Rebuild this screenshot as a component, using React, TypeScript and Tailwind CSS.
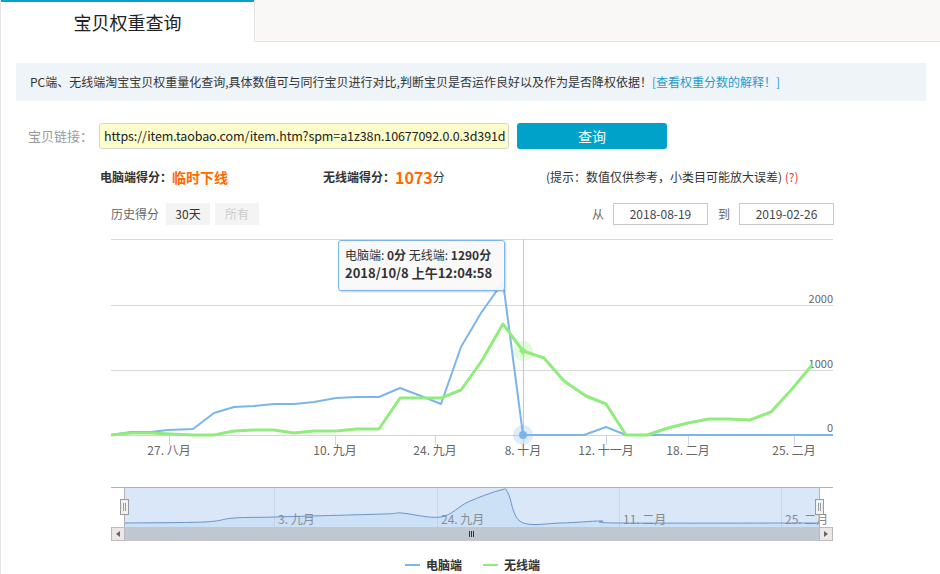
import React from 'react';

const FONT = "font-['Noto_Sans_CJK_SC','Noto_Sans',sans-serif]";

// 图表数据（像素坐标）
const pcPoints: [number, number][] = [
  [110, 435], [130, 432], [150, 432], [167, 430], [192, 429], [213, 413], [233, 407], [253, 406],
  [273, 404], [293, 404], [313, 402], [335, 398], [356, 397], [378, 397], [399, 388], [420, 396],
  [440, 404], [460, 347], [480, 313], [502, 282], [522, 435], [543, 435], [563, 435], [583, 435],
  [605, 427], [625, 435], [832, 435],
];

const wirelessPoints: [number, number][] = [
  [110, 435], [130, 433], [150, 433], [170, 434], [192, 435], [213, 435], [233, 431], [253, 430],
  [273, 430], [293, 433], [313, 431], [335, 431], [356, 429], [378, 429], [399, 398], [420, 398],
  [440, 398], [460, 390], [480, 362], [502, 324], [522, 351], [543, 358], [563, 381], [585, 396],
  [605, 404], [625, 435], [646, 435], [667, 428], [687, 423], [708, 419], [728, 419], [749, 420],
  [770, 412], [791, 389], [811, 365],
];

const navPoints: [number, number][] = [
  [123, 523], [203, 522], [233, 518], [273, 517], [383, 514], [400, 513], [440, 517], [467, 502],
  [500, 490], [507, 493], [520, 522], [560, 523], [600, 521], [617, 523], [818, 523],
];

const xTicks = [
  { x: 168, label: '27. 八月' },
  { x: 334, label: '10. 九月' },
  { x: 434, label: '24. 九月' },
  { x: 522, label: '8. 十月' },
  { x: 605, label: '12. 十一月' },
  { x: 687, label: '18. 二月' },
  { x: 793, label: '25. 二月' },
];

const navLabels = [
  { x: 273, label: '3. 九月' },
  { x: 436, label: '24. 九月' },
  { x: 618, label: '11. 二月' },
  { x: 780, label: '25. 二月' },
];

const toPolyline = (pts: [number, number][]) => pts.map((p) => p.join(',')).join(' ');

// 平滑曲线
const smoothPath = (pts: [number, number][]) => {
  let d = `M${pts[0][0]},${pts[0][1]}`;
  for (let i = 0; i < pts.length - 1; i++) {
    const p0 = pts[i - 1] || pts[i];
    const p1 = pts[i];
    const p2 = pts[i + 1];
    const p3 = pts[i + 2] || p2;
    const c1x = p1[0] + (p2[0] - p0[0]) / 6;
    const c1y = p1[1] + (p2[1] - p0[1]) / 6;
    const c2x = p2[0] - (p3[0] - p1[0]) / 6;
    const c2y = p2[1] - (p3[1] - p1[1]) / 6;
    d += ` C${c1x},${c1y} ${c2x},${c2y} ${p2[0]},${p2[1]}`;
  }
  return d;
};

function Chart() {
  const navLine = smoothPath(navPoints);
  return (
    <div className="relative">
      <svg width={940} height={342} viewBox="0 232 940 342" className="block" fontFamily="'Noto Sans CJK SC','Noto Sans',sans-serif">
        {/* 网格线 */}
        {[239, 305, 370].map((y) => (
          <line key={y} x1={110} x2={832} y1={y + 0.5} y2={y + 0.5} stroke="#d8d8d8" strokeWidth={1} />
        ))}
        <line x1={110} x2={832} y1={435.5} y2={435.5} stroke="#ccd6eb" strokeWidth={1} />
        {/* Y 轴标签 */}
        <text x={832} y={303} textAnchor="end" fontSize={11} fill="#666">2000</text>
        <text x={832} y={368} textAnchor="end" fontSize={11} fill="#666">1000</text>
        <text x={832} y={432} textAnchor="end" fontSize={11} fill="#666">0</text>
        {/* X 轴 */}
        {xTicks.map((t) => (
          <g key={t.label}>
            <line x1={t.x + 0.5} x2={t.x + 0.5} y1={435} y2={445} stroke="#ccd6eb" />
            <text x={t.x} y={455} textAnchor="middle" fontSize={12} fill="#666">{t.label}</text>
          </g>
        ))}
        {/* 十字线 */}
        <line x1={522.5} x2={522.5} y1={239} y2={435} stroke="#c8c8c8" strokeWidth={1} />
        {/* 数据线 */}
        <polyline points={toPolyline(pcPoints)} fill="none" stroke="#7cb5ec" strokeWidth={2} strokeLinejoin="round" />
        <polyline points={toPolyline(wirelessPoints)} fill="none" stroke="#90ed7d" strokeWidth={3} strokeLinejoin="round" />
        {/* 悬停点 */}
        <circle cx={522} cy={351} r={10} fill="#90ed7d" opacity={0.25} />
        <path d="M522,347 L526,351 L522,355 L518,351 Z" fill="#90ed7d" />
        <circle cx={522} cy={435} r={10} fill="#7cb5ec" opacity={0.25} />
        <circle cx={522} cy={435} r={4} fill="#7cb5ec" />

        {/* 导航器 */}
        <rect x={123} y={487} width={695} height={40} fill="#d9e7f8" />
        {navLabels.map((n) => (
          <g key={n.label}>
            <line x1={n.x + 0.5} x2={n.x + 0.5} y1={487} y2={527} stroke="#c9d6e6" />
            <text x={n.x + 4} y={524} fontSize={12} fill="#888">{n.label}</text>
          </g>
        ))}
        <path d={`${navLine} L818,527 L123,527 Z`} fill="#7cb5ec" opacity={0.12} />
        <path d={navLine} fill="none" stroke="#6b94c9" strokeWidth={1} />
        <path d="M110,487.5 H832 M123.5,487 V527 M818.5,487 V527" stroke="#b2b1b6" fill="none" />
        {/* 滚动条 */}
        <rect x={110} y={527} width={722} height={14} fill="#bfc7d1" />
        <rect x={110.5} y={527.5} width={13} height={13} fill="#ebe7e8" stroke="#bbb" />
        <path d="M119,531 L115,534 L119,537 Z" fill="#666" />
        <rect x={818.5} y={527.5} width={13} height={13} fill="#ebe7e8" stroke="#bbb" />
        <path d="M823,531 L827,534 L823,537 Z" fill="#666" />
        <path d="M468.5,531 V537 M470.5,531 V537 M472.5,531 V537" stroke="#333" strokeWidth={1} />
        {/* 手柄 */}
        <rect x={119.5} y={499.5} width={8} height={15} fill="#f2f2f2" stroke="#999" />
        <path d="M122.5,503 V511 M124.5,503 V511" stroke="#999" />
        <rect x={814.5} y={499.5} width={8} height={15} fill="#f2f2f2" stroke="#999" />
        <path d="M817.5,503 V511 M819.5,503 V511" stroke="#999" />

        {/* 图例 */}
        <line x1={404} x2={419} y1={565} y2={565} stroke="#7cb5ec" strokeWidth={2} />
        <text x={425} y={569.5} fontSize={12} fontWeight="bold" fill="#333">电脑端</text>
        <line x1={482} x2={497} y1={565} y2={565} stroke="#90ed7d" strokeWidth={2} />
        <text x={503} y={569.5} fontSize={12} fontWeight="bold" fill="#333">无线端</text>
      </svg>

      {/* 提示框 */}
      <div className="absolute left-[337px] top-[8px] w-[167px] h-[51px] rounded-[3px] border border-[#7cb5ec] bg-[#f9f9f9]/95 shadow-[1px_1px_2px_rgba(0,0,0,0.2)] px-[6px] pt-[5px] text-[12px] leading-[18px] text-[#333]">
        <div className="whitespace-nowrap">
          电脑端: <b>0分</b> 无线端: <b>1290分</b>
        </div>
        <div className="whitespace-nowrap font-bold text-[13px]">2018/10/8 上午12:04:58</div>
      </div>
    </div>
  );
}

export default function App() {
  return (
    <div className={`${FONT} w-[940px] h-[574px] overflow-hidden bg-white border-l border-[#e6e6e6] text-[#333]`}>
      {/* 顶部标签 */}
      <div className="flex h-[42px]">
        <div className="w-[253px] border-t-2 border-[#0aa0cc] bg-white flex items-center justify-center text-[18px] text-[#222]">
          宝贝权重查询
        </div>
        <div className="flex-1 bg-[#f9f8f7] border-l border-b border-[#e4e4e4]" />
      </div>

      {/* 说明 */}
      <div className="mt-[21px] ml-[15px] w-[910px] h-[38px] bg-[#eff4f8] flex items-center pl-[14px] text-[12px] text-[#333] whitespace-nowrap">
        PC端、无线端淘宝宝贝权重量化查询,具体数值可与同行宝贝进行对比,判断宝贝是否运作良好以及作为是否降权依据！
        <a href="#" className="text-[#1e9bd0]">[查看权重分数的解释！]</a>
      </div>

      {/* 链接输入 */}
      <div className="mt-[22px] flex items-center h-[26px] pl-[27px]">
        <span className="w-[71px] text-[13px] text-[#999]">宝贝链接：</span>
        <div className="w-[410px] h-[26px] rounded-[3px] border border-[#d6d6c8] bg-[#fdfdcc] flex items-center px-[4px] overflow-hidden whitespace-nowrap text-[12.5px] tracking-[-0.1px] text-[#222]">
          https://item.taobao.com/item.htm?spm=a1z38n.10677092.0.0.3d391d
        </div>
        <button className="ml-[8px] w-[150px] h-[26px] rounded-[3px] bg-[#01a2c9] text-white text-[14px]">查询</button>
      </div>

      {/* 得分 */}
      <div className="mt-[17px] flex items-center h-[22px] pl-[99px] text-[12px] whitespace-nowrap">
        <div className="w-[223px] flex items-center">
          <span className="font-bold">电脑端得分：</span>
          <span className="font-bold text-[14px] text-[#ff6a00]">临时下线</span>
        </div>
        <div className="w-[223px] flex items-center">
          <span className="font-bold">无线端得分：</span>
          <span className="font-bold text-[16px] text-[#ff6a00]">1073</span>
          <span>分</span>
        </div>
        <div>
          (提示：数值仅供参考，小类目可能放大误差) <span className="text-[#e4393c]">(?)</span>
        </div>
      </div>

      {/* 历史得分 */}
      <div className="mt-[15px] flex items-center h-[22px] pl-[110px] text-[12px]">
        <span className="text-[#666] w-[55px]">历史得分</span>
        <span className="w-[44px] h-[22px] bg-[#f4f4f4] flex items-center justify-center">30天</span>
        <span className="ml-[5px] w-[44px] h-[22px] bg-[#f4f4f4] flex items-center justify-center text-[#ccc]">所有</span>
        <div className="ml-auto mr-[106px] flex items-center">
          <span className="text-[#666] mr-[9px]">从</span>
          <span className="w-[95px] h-[22px] border border-[#c8c8c8] flex items-center justify-center text-[#444]">2018-08-19</span>
          <span className="text-[#666] ml-[10px] mr-[9px]">到</span>
          <span className="w-[95px] h-[22px] border border-[#c8c8c8] flex items-center justify-center text-[#444]">2019-02-26</span>
        </div>
      </div>

      <div className="mt-[7px]">
        <Chart />
      </div>
    </div>
  );
}
